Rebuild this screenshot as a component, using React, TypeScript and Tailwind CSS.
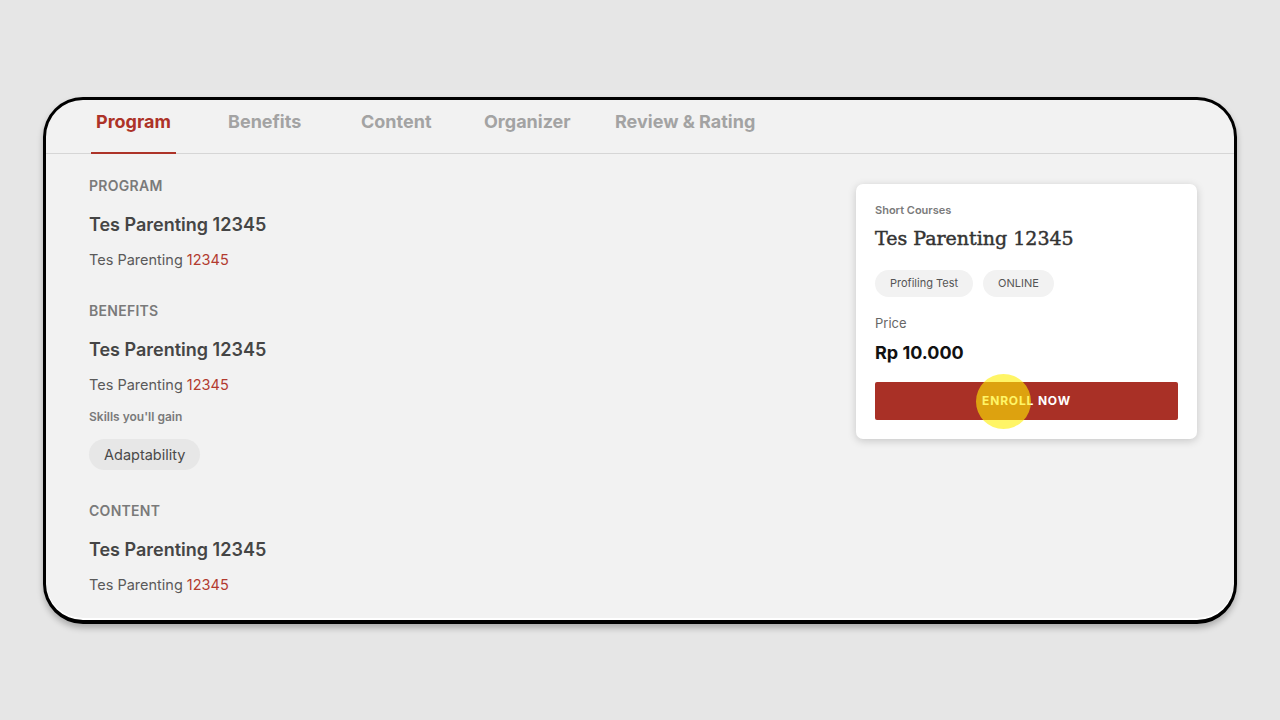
import React from "react";

const TABS: [string, string][] = [
  ["Program", "w-[132px]"],
  ["Benefits", "w-[133px]"],
  ["Content", "w-[123px]"],
  ["Organizer", "w-[131px]"],
  ["Review & Rating", ""],
];

function Section({ label, title, children }: { label: string; title: string; children?: React.ReactNode }) {
  return (
    <div className="mb-[31px]">
      <div className="text-[14px] leading-[20px] font-semibold tracking-[0.02em] text-[#7a7a7a]">{label}</div>
      <div className="mt-[17px] text-[18px] leading-[24px] font-semibold text-[#454545]">{title}</div>
      <div className="mt-[13px] text-[14.5px] leading-[20px] text-[#5a5a5a]">
        Tes Parenting <span className="text-[#b23b30]">12345</span>
      </div>
      {children}
    </div>
  );
}

export default function App() {
  return (
    <div className="w-[1280px] h-[720px] bg-[#e6e6e6] pt-[97px] pl-[43px]" style={{ fontFamily: "Inter, 'Noto Sans', sans-serif" }}>
      <div className="w-[1194px] h-[527px] rounded-[40px] border-[3px] border-b-[4px] border-black bg-[#f2f2f2] overflow-hidden shadow-[0_4px_6px_rgba(0,0,0,0.25),inset_0_-2px_0_#ffffff]">
        <div className="flex pl-[45px] h-[54px] border-b border-[#d6d6d6]">
          {TABS.map(([t, w], i) => (
            <div key={t} className={`${w} flex`}>
              <div
                className={
                  i === 0
                    ? "px-[5px] flex items-center text-[18px] font-bold text-[#ad3328] border-b-2 border-[#ad3328] -mb-px pb-[10px]"
                    : "px-[5px] flex items-center text-[18px] font-bold text-[#a3a3a3] pb-[11px]"
                }
              >
                {t}
              </div>
            </div>
          ))}
        </div>
        <div className="flex justify-between pl-[43px] pr-[37px]">
          <div className="pt-[22px]">
            <Section label="PROGRAM" title="Tes Parenting 12345" />
            <Section label="BENEFITS" title="Tes Parenting 12345">
              <div className="mt-[14px] text-[12px] leading-[16px] font-semibold text-[#7a7a7a]">Skills you'll gain</div>
              <div className="mt-[14px] inline-flex h-[31px] items-center rounded-full bg-[#e7e7e7] px-[15px] text-[14.5px] text-[#4a4a4a]">
                Adaptability
              </div>
            </Section>
            <Section label="CONTENT" title="Tes Parenting 12345" />
          </div>
          <div className="mt-[30px] w-[341px] h-[255px] bg-white rounded-[7px] shadow-[0_2px_8px_rgba(0,0,0,0.18)] px-[19px] pt-[20px]">
            <div className="text-[11px] leading-[12px] font-semibold text-[#7a7a7a]">Short Courses</div>
            <div
              className="mt-[9px] text-[19px] leading-[26px] font-normal text-[#333] [-webkit-text-stroke:0.45px_#333]"
              style={{ fontFamily: "'DejaVu Serif', serif" }}
            >
              Tes Parenting 12345
            </div>
            <div className="mt-[19px] flex gap-[10px]">
              <span className="h-[27px] px-[15px] rounded-full bg-[#f2f2f2] text-[11px] text-[#555] flex items-center">Profiling Test</span>
              <span className="h-[27px] px-[15px] rounded-full bg-[#f2f2f2] text-[11px] text-[#555] flex items-center">ONLINE</span>
            </div>
            <div className="mt-[18px] text-[13px] leading-[16px] text-[#666]">Price</div>
            <div className="mt-[10px] text-[18px] leading-[24px] font-bold text-[#111]">Rp 10.000</div>
            <div className="relative mt-[17px] h-[38px] rounded-[2px] bg-[#a93026] flex items-center justify-center text-[12px] font-bold tracking-[0.07em] text-white">
              ENROLL NOW
              <span className="absolute left-[101px] top-[-8px] w-[55px] h-[55px] rounded-full bg-[#ffee00]/60" />
            </div>
          </div>
        </div>
      </div>
    </div>
  );
}
